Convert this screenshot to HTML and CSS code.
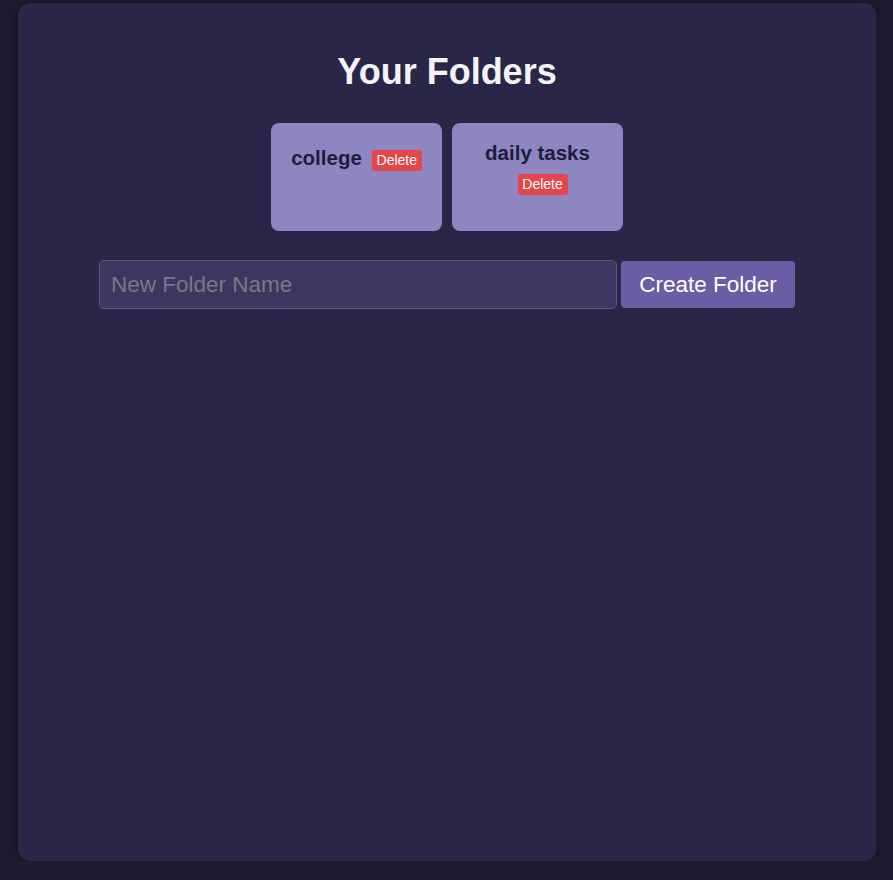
FILE: index.html
```html
<!DOCTYPE html>
<html lang="en">
<head>
<meta charset="utf-8">
<title>Your Folders</title>
<link rel="stylesheet" href="styles.css">
</head>
<body>
<main class="panel">
  <h2 class="title">Your Folders</h2>
  <div class="folders">
    <div class="folder">
      <span class="folder-name">college</span><button class="delete-btn">Delete</button>
    </div>
    <div class="folder">
      <span class="folder-name">daily tasks</span><button class="delete-btn">Delete</button>
    </div>
  </div>
  <form class="create-row">
    <input class="folder-input" type="text" placeholder="New Folder Name">
    <button class="create-btn" type="button">Create Folder</button>
  </form>
</main>
</body>
</html>
```
FILE: styles.css
```css
* { box-sizing: border-box; }
html, body { margin: 0; padding: 0; }
body {
  background: #1e1c2f;
  font-family: "Liberation Sans", Arial, sans-serif;
  padding-top: 3px;
}
.panel {
  width: 858px;
  height: 858px;
  margin: 0 0 0 18px;
  background: #2a2647;
  border-radius: 12px;
  box-shadow: 0 0 10px rgba(0, 0, 0, 0.35);
  padding: 28px 20px 20px;
}
.title {
  margin: 20px 0 0;
  text-align: center;
  color: #f4f4f8;
  font-size: 36px;
  line-height: 41px;
  font-weight: bold;
}
.folders {
  display: flex;
  justify-content: center;
  gap: 10px;
  margin-top: 31px;
}
.folder {
  width: 171px;
  height: 108px;
  background: #8d86c0;
  border-radius: 8px;
  padding: 19px 15px;
  display: flex;
  flex-wrap: wrap;
  justify-content: center;
  align-items: baseline;
  align-content: flex-start;
  row-gap: 2px;
}
.folder-name {
  color: #1f1c3b;
  font-size: 20.5px;
  font-weight: bold;
  line-height: 22px;
}
.delete-btn {
  margin: 8px 0 0 10px;
  width: 50px;
  height: 21px;
  padding: 0;
  border: none;
  border-radius: 3px;
  background: #e5464b;
  color: #ffffff;
  font-family: "Liberation Sans", Arial, sans-serif;
  font-size: 14px;
  line-height: 21px;
}
.create-row {
  display: flex;
  justify-content: center;
  align-items: center;
  gap: 4px;
  margin-top: 29px;
}
.folder-input {
  width: 518px;
  height: 49px;
  background: #3c3660;
  border: 1px solid #5d5779;
  border-radius: 5px;
  padding: 0 11px;
  font-family: "Liberation Sans", Arial, sans-serif;
  font-size: 22.5px;
  color: #e8e6f0;
  outline: none;
}
.folder-input::placeholder { color: #7b7786; }
.create-btn {
  width: 174px;
  height: 47px;
  background: #6b5ca6;
  border: none;
  border-radius: 4px;
  color: #ffffff;
  font-family: "Liberation Sans", Arial, sans-serif;
  font-size: 22.5px;
  padding: 0;
}
```
